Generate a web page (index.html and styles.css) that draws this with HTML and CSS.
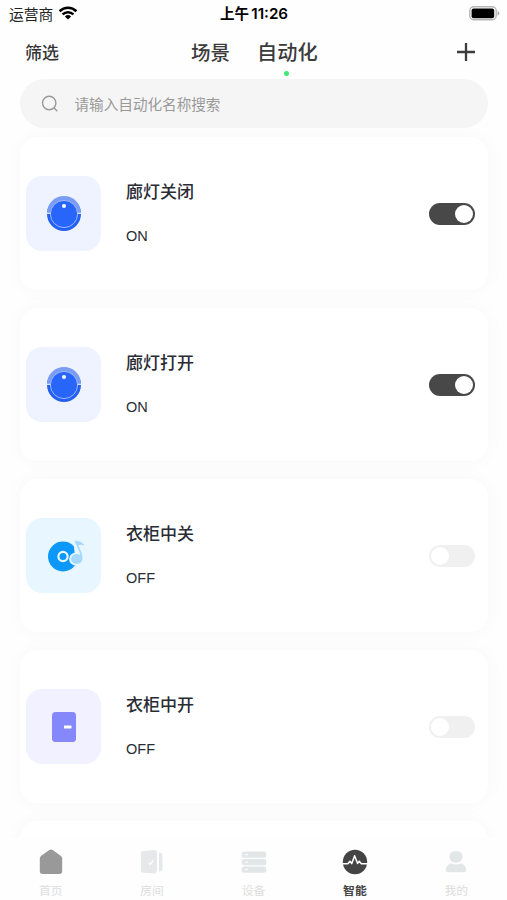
FILE: index.html
```
<!DOCTYPE html>
<html lang="zh-CN">
<head>
<meta charset="utf-8">
<title>自动化</title>
<link rel="stylesheet" href="styles.css">
</head>
<body>
<div class="app">
  <div class="status">
    <div class="carrier">运营商
      <svg width="20" height="14" viewBox="0 0 20 14" fill="none" stroke="#000" stroke-width="2.6"><path d="M1.6 5.2a12 12 0 0 1 16.8 0M4.6 8.4a7.8 7.8 0 0 1 10.8 0"/><path d="M10 13.6 6.9 10.5a4.5 4.5 0 0 1 6.2 0z" fill="#000" stroke="none"/></svg>
    </div>
    <div class="time">上午 <span class="clock">11:26</span></div>
    <svg class="battery" width="31" height="15" viewBox="0 0 31 15"><rect x=".8" y=".8" width="26.4" height="13" rx="4" fill="#fff" stroke="#b5b5b5" stroke-width="1.4"/><rect x="2.6" y="2.6" width="22.6" height="9.6" rx="2" fill="#000"/><path d="M28.6 5v4.7q1.8-.8 1.8-2.35T28.6 5z" fill="#aaa"/></svg>
  </div>
  <header class="header">
    <span class="filter">筛选</span>
    <div class="tabs"><span class="tab">场景</span><span class="tab active">自动化</span></div>
    <svg class="plus" width="20" height="20" viewBox="0 0 20 20" stroke="#3c3c3c" stroke-width="2.3"><path d="M1 10h18M10 1v18"/></svg>
  </header>
  <div class="search">
    <svg width="18" height="18" viewBox="0 0 18 18" fill="none" stroke="#999" stroke-width="1.4" stroke-linecap="round"><circle cx="8.2" cy="8" r="6.7"/><path d="m13.2 13 2.6 2.8"/></svg>
    <span>请输入自动化名称搜索</span>
  </div>
  <main class="list">
    <section class="card">
      <div class="tile knob"><svg width="36" height="36" viewBox="0 0 36 36"><circle cx="18" cy="18" r="17" fill="#2460f4"/><path d="M1 17a17 17 0 0 1 34 0z" fill="#7b9cf5"/><circle cx="18" cy="18" r="13.6" fill="#2865fa" stroke="#9db8ff" stroke-width="1"/><path d="M1 17.4h3.4M31.6 17.4H35" stroke="#d5e1ff" stroke-width="1.2"/><circle cx="18" cy="10" r="2" fill="#fff"/></svg></div>
      <div class="info"><div class="name">廊灯关闭</div><div class="state">ON</div></div>
      <div class="switch on"></div>
    </section>
    <section class="card">
      <div class="tile knob"><svg width="36" height="36" viewBox="0 0 36 36"><circle cx="18" cy="18" r="17" fill="#2460f4"/><path d="M1 17a17 17 0 0 1 34 0z" fill="#7b9cf5"/><circle cx="18" cy="18" r="13.6" fill="#2865fa" stroke="#9db8ff" stroke-width="1"/><path d="M1 17.4h3.4M31.6 17.4H35" stroke="#d5e1ff" stroke-width="1.2"/><circle cx="18" cy="10" r="2" fill="#fff"/></svg></div>
      <div class="info"><div class="name">廊灯打开</div><div class="state">ON</div></div>
      <div class="switch on"></div>
    </section>
    <section class="card">
      <div class="tile music"><svg width="42" height="36" viewBox="0 0 42 36"><circle cx="20" cy="18.500" r="15" fill="#0c98fb"/><circle cx="20" cy="18.500" r="4.600" fill="#0c98fb" stroke="#e8f6ff" stroke-width="2.200"/><ellipse cx="33.500" cy="21" rx="7.400" ry="6.600" fill="#e8f6ff"/><path d="M30 1 38 17l-6 1z" fill="#e8f6ff"/><ellipse cx="33.700" cy="21" rx="5.700" ry="4.900" fill="#a4d8ff"/><path d="M31.500 2.200c3.600 1.300 8 .8 10 5.600-2.500-1.400-4.800-1.200-6.300-.5 2 4.200 4.700 9.200 4.200 13.700l-2-3.500c-.8-5.200-4.200-10-5.900-15.300z" fill="#a4d8ff"/></svg></div>
      <div class="info"><div class="name">衣柜中关</div><div class="state">OFF</div></div>
      <div class="switch"></div>
    </section>
    <section class="card">
      <div class="tile door"><svg width="24" height="30" viewBox="0 0 24 30"><rect width="24" height="30" rx="3.500" fill="#8588fb"/><rect x="12" y="13.400" width="7.500" height="3" rx=".5" fill="#fff"/></svg></div>
      <div class="info"><div class="name">衣柜中开</div><div class="state">OFF</div></div>
      <div class="switch"></div>
    </section>
    <section class="card"></section>
  </main>
  <nav class="nav">
    <div class="item"><svg width="26" height="26" viewBox="0 0 26 26"><path d="M11.300 1.100q1.700-1.100 3.400 0l8 5.600q1.500 1.100 1.500 3v12.400q0 2.900-2.900 2.900H4.700q-2.900 0-2.900-2.900V9.700q0-1.900 1.500-3z" fill="#999"/></svg><span>首页</span></div>
    <div class="item"><svg width="26" height="26" viewBox="0 0 26 26" fill="#e6e8e9"><path d="M2 4q0-1.600 1.600-1.800L15 1q3 .4 3 3v17.500q0 2.600-3 3L3.600 23.500Q2 23.300 2 22zM20 3.500q3.500.2 3.500 2.500v14q0 2.300-3.500 2.500z"/><path d="m9.800 14 1.400 1.200 3.300-3.800" fill="none" stroke="#fff" stroke-width="1.400"/></svg><span>房间</span></div>
    <div class="item"><svg width="26" height="26" viewBox="0 0 26 26" fill="#e3e6e7"><rect x=".7" y="2.500" width="24.600" height="6.200" rx="2.500"/><rect x=".7" y="10" width="24.600" height="6.200" rx="2.500"/><rect x=".7" y="17.500" width="24.600" height="6.200" rx="2.500"/><path d="M4 5.600h3M4 13.100h3M4 20.600h3" stroke="#fff"/></svg><span>设备</span></div>
    <div class="item current"><svg width="26" height="26" viewBox="0 0 26 26"><circle cx="13" cy="13" r="12.200" fill="#444"/><path d="M.6 14.800h5.200l2.200-2.600 1.700 2.500 2.900-8 3 7.700 1.700-2.200 2 2.600h6.100" fill="none" stroke="#fff" stroke-width="1.500" stroke-linejoin="round"/></svg><span>智能</span></div>
    <div class="item"><svg width="26" height="26" viewBox="0 0 26 26" fill="#e3e6e7"><path d="M13 2.300c4 0 6.600 1.700 6.600 5.200 0 3.700-2.600 6.200-6.600 6.200s-6.600-2.500-6.600-6.200c0-3.500 2.600-5.200 6.600-5.200zM8 14.300q5 2.600 10 0c3.300 1.300 5.300 3.700 5.300 7.200q0 1.700-1.800 1.700h-17q-1.800 0-1.800-1.700c0-3.500 2-5.900 5.300-7.200z"/></svg><span>我的</span></div>
  </nav>
</div>
</body>
</html>
```
FILE: styles.css
```
* { box-sizing: border-box; }
body { margin: 0; background: #fefefe; font-family: "Noto Sans CJK SC", sans-serif; }
svg { display: block; flex: none; }
.app { width: 507px; height: 900px; display: flex; flex-direction: column; overflow: hidden; }
.status { height: 27px; flex: none; display: grid; grid-template-columns: 1fr auto 1fr; align-items: center; padding: 0 7px 0 9px; color: #000; }
.carrier { display: flex; align-items: center; gap: 5px; font-size: 14.800px; line-height: 26px; padding-bottom: 1px; color: #222; }
.carrier svg { margin-top: -1px; }
.time { font-size: 14.500px; font-weight: 700; line-height: 26px; padding-bottom: 1px; white-space: nowrap; margin-left: -1px; }
.clock { font-family: Inter, sans-serif; font-weight: 600; font-size: 15.200px; margin-left: -1px; }
.battery { justify-self: end; margin-top: -1px; }
.header { height: 52px; flex: none; display: flex; align-items: center; padding: 0 31px 2px 25px; color: #333; }
.filter { font-size: 17px; font-weight: 500; line-height: 24px; width: 166px; }
.tabs { display: flex; gap: 27px; flex: 1; }
.tab { font-size: 19.500px; font-weight: 500; line-height: 28px; color: #3b3b3b; position: relative; }
.tab.active { font-size: 20.200px; }
.tab.active::after { content: ""; position: absolute; left: 50%; bottom: -10px; width: 5px; height: 5px; margin-left: -3px; border-radius: 50%; background: #3fe878; }
.search { height: 49px; flex: none; margin: 0 19px 0 20px; border-radius: 25px; background: #f5f5f5; display: flex; align-items: center; gap: 15.500px; padding-left: 21px; font-size: 14.600px; color: #999; }
.search span { margin-top: -1px; }
.list { flex: 1; min-height: 0; overflow: hidden; padding: 9px 19px 0 20px; display: flex; flex-direction: column; gap: 18px; }
.card { height: 153px; flex: none; border-radius: 18px; background: #fff; box-shadow: 0 0 20px rgba(0, 0, 0, .03); display: flex; align-items: center; padding: 0 13px 0 6px; }
.tile { width: 75px; height: 75px; border-radius: 16px; display: flex; align-items: center; justify-content: center; }
.knob { background: #eff3ff; }
.music { background: #e8f6ff; }
.door { background: #f1f1ff; }
.info { flex: 1; margin: -2px 0 0 25px; color: #292c34; }
.name { font-size: 17px; font-weight: 500; line-height: 24px; }
.state { font-family: "Liberation Sans", sans-serif; font-size: 14.500px; line-height: 20px; margin-top: 23px; }
.switch { width: 46px; height: 22px; border-radius: 11px; background: #f0f0f0; padding: 2px; display: flex; }
.switch::before { content: ""; width: 18px; height: 18px; border-radius: 50%; background: #fff; }
.switch.on { background: #484848; justify-content: flex-end; }
.nav { height: 62px; flex: none; display: flex; background: #fefefe; padding-top: 11px; }
.item { flex: 1; display: flex; flex-direction: column; align-items: center; gap: 7px; font-size: 11.800px; line-height: 16px; color: #ddd; }
.current { color: #444; font-weight: 700; }
```
